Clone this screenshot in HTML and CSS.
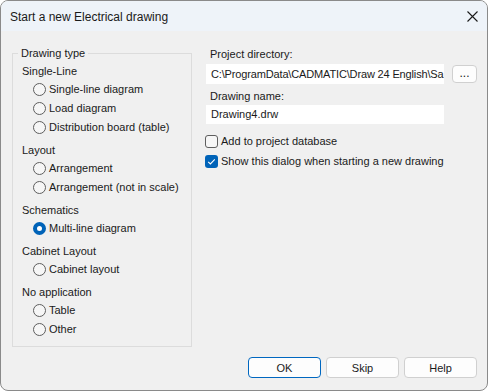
FILE: index.html
```html
<!DOCTYPE html>
<html lang="en">
<head>
    <meta charset="UTF-8">
    <title>Start a new Electrical drawing</title>
    <link rel="stylesheet" href="styles.css">
</head>
<body>
    <div class="window">
        <div class="titlebar">
            <span class="title">Start a new Electrical drawing</span>
            <svg class="close" width="11" height="11" viewBox="0 0 11 11">
                <path d="M0.5 0.5 L10.5 10.5 M10.5 0.5 L0.5 10.5" stroke="#1a1a1a" stroke-width="1.1" fill="none"/>
            </svg>
        </div>
        <div class="content">
            <div class="top">
                <fieldset class="group">
                    <legend>Drawing type</legend>
                    <div class="section">
                        <div class="heading">Single-Line</div>
                        <div class="radio"><span class="dot"></span>Single-line diagram</div>
                        <div class="radio"><span class="dot"></span>Load diagram</div>
                        <div class="radio"><span class="dot"></span>Distribution board (table)</div>
                    </div>
                    <div class="section">
                        <div class="heading">Layout</div>
                        <div class="radio"><span class="dot"></span>Arrangement</div>
                        <div class="radio"><span class="dot"></span>Arrangement (not in scale)</div>
                    </div>
                    <div class="section">
                        <div class="heading">Schematics</div>
                        <div class="radio"><span class="dot checked"></span>Multi-line diagram</div>
                    </div>
                    <div class="section">
                        <div class="heading">Cabinet Layout</div>
                        <div class="radio"><span class="dot"></span>Cabinet layout</div>
                    </div>
                    <div class="section">
                        <div class="heading">No application</div>
                        <div class="radio"><span class="dot"></span>Table</div>
                        <div class="radio"><span class="dot"></span>Other</div>
                    </div>
                </fieldset>

                <div class="panel">
                    <div class="label">Project directory:</div>
                    <div class="field-row">
                        <div class="input path">C:\ProgramData\CADMATIC\Draw 24 English\Sa</div>
                        <button class="browse">...</button>
                    </div>
                    <div class="label second">Drawing name:</div>
                    <div class="field-row">
                        <div class="input short">Drawing4.drw</div>
                        <span class="spacer"></span>
                    </div>
                    <div class="check first">
                        <span class="box"></span>Add to project database
                    </div>
                    <div class="check">
                        <span class="box checked">
                            <svg width="13" height="13" viewBox="0 0 13 13">
                                <path d="M3.2 6.8 L5.4 9 L9.8 4.4" stroke="#fff" stroke-width="1.1" fill="none"/>
                            </svg>
                        </span>Show this dialog when starting a new drawing
                    </div>
                </div>
            </div>

            <div class="buttons">
                <button class="btn default">OK</button>
                <button class="btn">Skip</button>
                <button class="btn">Help</button>
            </div>
        </div>
    </div>
</body>
</html>
```

FILE: styles.css
```css
body {
    margin: 0;
    background-color: #ffffff;
    font-family: "Liberation Sans", Arial, sans-serif;
    font-size: 11px;
    color: #1a1a1a;
}
.window {
    width: 488px;
    height: 391px;
    box-sizing: border-box;
    border: 1px solid #8a8a8a;
    border-radius: 8px;
    overflow: hidden;
    background-color: #f0f0f0;
    display: flex;
    flex-direction: column;
}
.titlebar {
    height: 30px;
    flex-shrink: 0;
    background-color: #eef3f9;
    display: flex;
    align-items: center;
    justify-content: space-between;
    padding: 0 9px 0 9px;
}
.title {
    font-size: 12px;
    margin-top: 1px;
}
.close {
    margin-top: 1px;
}
.content {
    flex: 1;
    display: flex;
    flex-direction: column;
    padding: 14.5px 10px 12px 11px;
}
.top {
    display: flex;
    align-items: flex-start;
    gap: 12px;
}

/* group box on the left */
.group {
    width: 180px;
    flex-shrink: 0;
    box-sizing: border-box;
    margin: 0;
    padding: 2px 0 7.5px 9px;
    border: 1px solid #dcdcdc;
    min-width: 0;
}
.group legend {
    line-height: 15px;
    padding: 0 3px;
    margin-left: -4px;
}
.section {
    margin-bottom: 5px;
}
.section:last-child {
    margin-bottom: 0;
}
.heading {
    height: 17px;
    line-height: 17px;
}
.radio {
    height: 19px;
    display: flex;
    align-items: center;
    padding-left: 11px;
}
.dot {
    width: 13px;
    height: 13px;
    box-sizing: border-box;
    border: 1px solid #5e5e5e;
    border-radius: 50%;
    background-color: #f6f6f6;
    margin-right: 3px;
    flex-shrink: 0;
}
.dot.checked {
    border: 4px solid #0063b8;
    background-color: #ffffff;
}

/* right side */
.panel {
    flex: 1;
    min-width: 0;
}
.label {
    line-height: 15px;
    margin-top: 1px;
    margin-bottom: 2.5px;
    padding-left: 6px;
}
.label.second {
    margin-top: 4.5px;
    margin-bottom: 1px;
}
.field-row {
    display: flex;
    align-items: center;
    gap: 8px;
}
.input {
    flex: 1;
    min-width: 0;
    height: 20px;
    line-height: 20px;
    margin-left: 2px;
    padding-left: 5px;
    background-color: #ffffff;
    white-space: nowrap;
    overflow: hidden;
}
.input.path {
    letter-spacing: -0.15px;
}
.input.short {
    height: 19px;
    line-height: 19px;
}
.spacer {
    width: 25px;
    flex-shrink: 0;
}
.browse {
    width: 25px;
    height: 18px;
    flex-shrink: 0;
    box-sizing: border-box;
    border: 1px solid #d0d0d0;
    border-radius: 4px;
    background-color: #fdfdfd;
    font-family: inherit;
    font-size: 12px;
    line-height: 12px;
    padding: 0 0 2px 0;
    color: #1a1a1a;
}
.check {
    height: 19px;
    display: flex;
    align-items: center;
    margin-top: 1px;
    padding-left: 1px;
}
.check.first {
    margin-top: 8px;
}
.box {
    width: 13px;
    height: 13px;
    box-sizing: border-box;
    border: 1px solid #5e5e5e;
    border-radius: 3px;
    background-color: #f6f6f6;
    margin-right: 3px;
    flex-shrink: 0;
    display: flex;
}
.box.checked {
    border: none;
    background-color: #0063b8;
}

/* buttons at the bottom */
.buttons {
    margin-top: auto;
    display: flex;
    justify-content: flex-end;
    gap: 5px;
}
.btn {
    width: 73px;
    height: 21px;
    box-sizing: border-box;
    border: 1px solid #d0d0d0;
    border-radius: 4px;
    background-color: #fdfdfd;
    font-family: inherit;
    font-size: 11px;
    color: #1a1a1a;
    padding: 0;
}
.btn.default {
    border-color: #0067c0;
}
```
